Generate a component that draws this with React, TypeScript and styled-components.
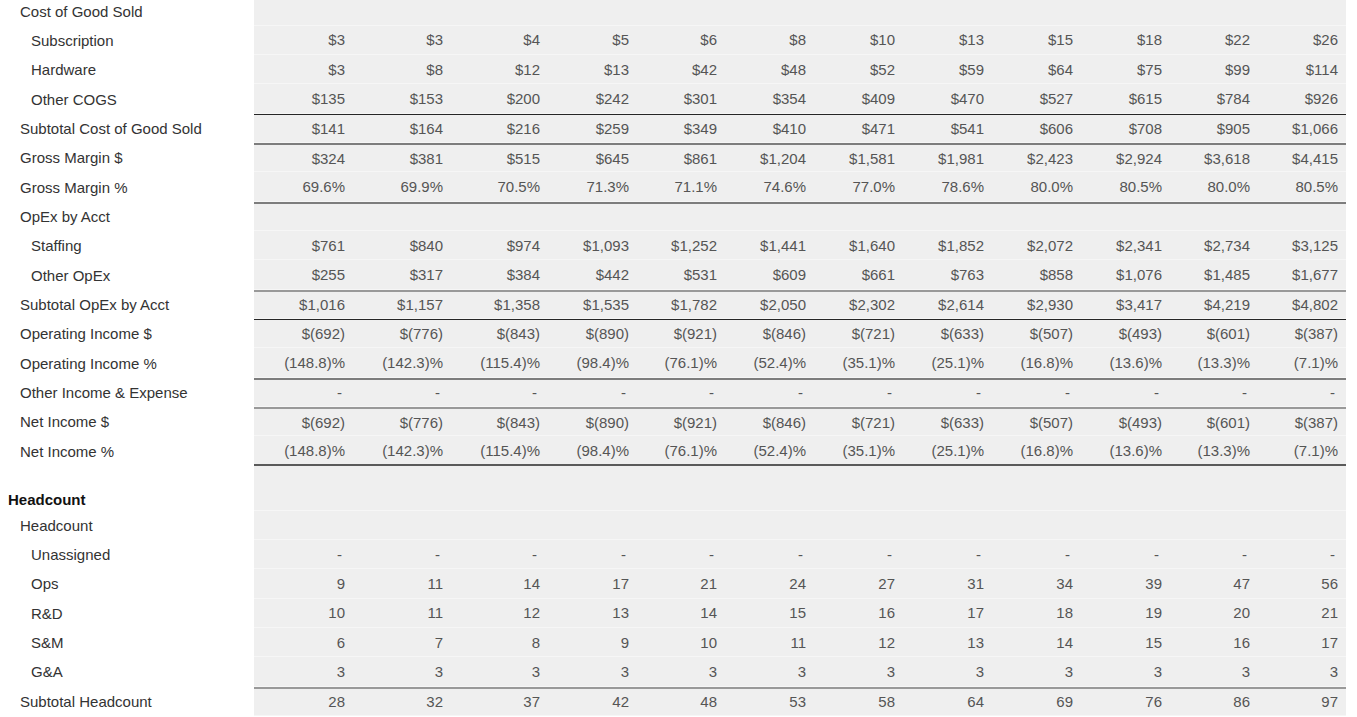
import React from "react";
import styled, { createGlobalStyle } from "styled-components";

const GlobalStyle = createGlobalStyle`
  html, body {
    margin: 0;
    padding: 0;
    background: #ffffff;
    font-family: "Liberation Sans", Arial, sans-serif;
    overflow: hidden;
  }
`;

type Rule = "none" | "dark" | "mid" | "grey";

const ruleCss: Record<Rule, string> = {
  none: "border-top: 0;",
  dark: "border-top: 1px solid #262626;",
  mid: "border-top: 2px solid #7d7d7d;",
  grey: "border-top: 2px solid #999999;",
};

const Sheet = styled.div`
  display: flex;
  flex-direction: column;
  width: 1346px;
  margin-top: -3.5px;
`;

const Row = styled.div<{ $h: number; $rule: Rule; $closing?: boolean }>`
  display: grid;
  grid-template-columns: 254px 99px 98px 97px 89px 88px 89px 89px 89px 89px 89px 88px 88px;
  height: ${(p) => p.$h}px;
  & > div:not(:first-child) {
    ${(p) => ruleCss[p.$rule]}
    ${(p) => (p.$closing ? "border-bottom: 2px solid #5a5a5a;" : "")}
  }
`;

const Label = styled.div<{ $level: number; $bold?: boolean; $bottom?: boolean }>`
  display: flex;
  align-items: ${(p) => (p.$bottom ? "flex-end" : "center")};
  padding-left: ${(p) => (p.$level === 0 ? 8 : p.$level === 1 ? 20 : 31)}px;
  padding-bottom: ${(p) => (p.$bottom ? 3 : 0)}px;
  font-size: 15px;
  font-weight: ${(p) => (p.$bold ? 700 : 400)};
  color: ${(p) => (p.$bold ? "#111111" : "#333333")};
  white-space: nowrap;
  box-sizing: border-box;
`;

const Cell = styled.div<{ $dash?: boolean }>`
  display: flex;
  align-items: center;
  justify-content: flex-end;
  box-sizing: border-box;
  background: #efefef;
  border-bottom: 1px solid #f6f6f6;
  padding-right: ${(p) => (p.$dash ? 11 : 8)}px;
  font-size: 15px;
  color: #555555;
  white-space: nowrap;
`;

type Line = {
  label: string;
  level: number;
  values?: string[];
  rule?: Rule;
  bold?: boolean;
  h?: number;
  closing?: boolean;
};

const dash = Array(12).fill("-");
const oi = ["$(692)", "$(776)", "$(843)", "$(890)", "$(921)", "$(846)", "$(721)", "$(633)", "$(507)", "$(493)", "$(601)", "$(387)"];
const oip = ["(148.8)%", "(142.3)%", "(115.4)%", "(98.4)%", "(76.1)%", "(52.4)%", "(35.1)%", "(25.1)%", "(16.8)%", "(13.6)%", "(13.3)%", "(7.1)%"];

const RH = 29.33;

const lines: Line[] = [
  { label: "Cost of Good Sold", level: 1 },
  { label: "Subscription", level: 2, values: ["$3", "$3", "$4", "$5", "$6", "$8", "$10", "$13", "$15", "$18", "$22", "$26"] },
  { label: "Hardware", level: 2, values: ["$3", "$8", "$12", "$13", "$42", "$48", "$52", "$59", "$64", "$75", "$99", "$114"] },
  { label: "Other COGS", level: 2, values: ["$135", "$153", "$200", "$242", "$301", "$354", "$409", "$470", "$527", "$615", "$784", "$926"] },
  { label: "Subtotal Cost of Good Sold", level: 1, rule: "dark", values: ["$141", "$164", "$216", "$259", "$349", "$410", "$471", "$541", "$606", "$708", "$905", "$1,066"] },
  { label: "Gross Margin $", level: 1, rule: "mid", values: ["$324", "$381", "$515", "$645", "$861", "$1,204", "$1,581", "$1,981", "$2,423", "$2,924", "$3,618", "$4,415"] },
  { label: "Gross Margin %", level: 1, values: ["69.6%", "69.9%", "70.5%", "71.3%", "71.1%", "74.6%", "77.0%", "78.6%", "80.0%", "80.5%", "80.0%", "80.5%"] },
  { label: "OpEx by Acct", level: 1, rule: "mid" },
  { label: "Staffing", level: 2, values: ["$761", "$840", "$974", "$1,093", "$1,252", "$1,441", "$1,640", "$1,852", "$2,072", "$2,341", "$2,734", "$3,125"] },
  { label: "Other OpEx", level: 2, values: ["$255", "$317", "$384", "$442", "$531", "$609", "$661", "$763", "$858", "$1,076", "$1,485", "$1,677"] },
  { label: "Subtotal OpEx by Acct", level: 1, rule: "grey", values: ["$1,016", "$1,157", "$1,358", "$1,535", "$1,782", "$2,050", "$2,302", "$2,614", "$2,930", "$3,417", "$4,219", "$4,802"] },
  { label: "Operating Income $", level: 1, rule: "dark", values: oi },
  { label: "Operating Income %", level: 1, values: oip },
  { label: "Other Income & Expense", level: 1, rule: "mid", values: dash },
  { label: "Net Income $", level: 1, rule: "grey", values: oi },
  { label: "Net Income %", level: 1, values: oip, closing: true },
  { label: "Headcount", level: 0, bold: true, h: 44.8 },
  { label: "Headcount", level: 1 },
  { label: "Unassigned", level: 2, values: dash },
  { label: "Ops", level: 2, values: ["9", "11", "14", "17", "21", "24", "27", "31", "34", "39", "47", "56"] },
  { label: "R&D", level: 2, values: ["10", "11", "12", "13", "14", "15", "16", "17", "18", "19", "20", "21"] },
  { label: "S&M", level: 2, values: ["6", "7", "8", "9", "10", "11", "12", "13", "14", "15", "16", "17"] },
  { label: "G&A", level: 2, values: Array(12).fill("3") },
  { label: "Subtotal Headcount", level: 1, rule: "grey", values: ["28", "32", "37", "42", "48", "53", "58", "64", "69", "76", "86", "97"] },
];

export default function App() {
  return (
    <>
      <GlobalStyle />
      <Sheet>
        {lines.map((l, i) => {
          const vals = l.values ?? Array(12).fill("");
          return (
            <Row key={i} $h={l.h ?? RH} $rule={l.rule ?? "none"} $closing={l.closing}>
              <Label $level={l.level} $bold={l.bold} $bottom={!!l.h}>
                {l.label}
              </Label>
              {vals.map((v, j) => (
                <Cell key={j} $dash={v === "-"}>
                  {v}
                </Cell>
              ))}
            </Row>
          );
        })}
      </Sheet>
    </>
  );
}
